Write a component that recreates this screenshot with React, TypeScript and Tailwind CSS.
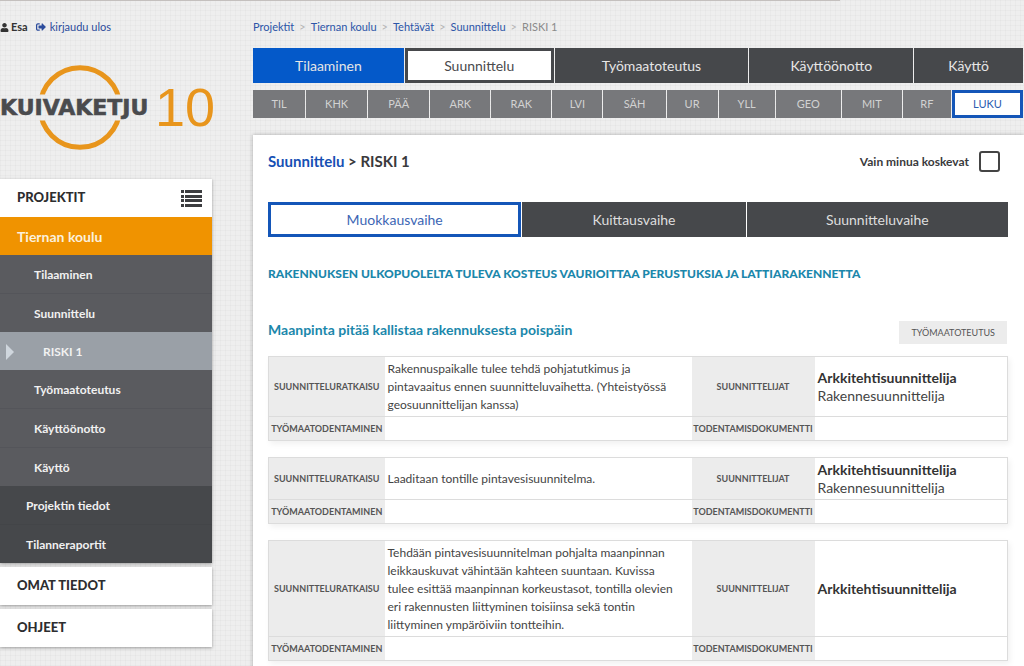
import type { ReactNode } from "react";
import { FaSignOutAlt, FaUser } from "react-icons/fa";

const phases = ["Työmaatoteutus", "Käyttöönotto", "Käyttö"];

const roles = ["TIL", "KHK", "PÄÄ", "ARK", "RAK", "LVI", "SÄH", "UR", "YLL", "GEO", "MIT", "RF"];

const crumbs = ["Projektit", "Tiernan koulu", "Tehtävät", "Suunnittelu"];

const tasks = [
  {
    solution:
      "Rakennuspaikalle tulee tehdä pohjatutkimus ja pintavaaitus ennen suunnitteluvaihetta. (Yhteistyössä geosuunnittelijan kanssa)",
    lead: "Arkkitehtisuunnittelija",
    other: "Rakennesuunnittelija",
  },
  {
    solution: "Laaditaan tontille pintavesisuunnitelma.",
    lead: "Arkkitehtisuunnittelija",
    other: "Rakennesuunnittelija",
  },
  {
    solution:
      "Tehdään pintavesisuunnitelman pohjalta maanpinnan leikkauskuvat vähintään kahteen suuntaan. Kuvissa tulee esittää maanpinnan korkeustasot, tontilla olevien eri rakennusten liittyminen toisiinsa sekä tontin liittyminen ympäröiviin tontteihin.",
    lead: "Arkkitehtisuunnittelija",
    other: "",
  },
];

function Logo() {
  return (
    <svg viewBox="0 0 216 86" className="block h-[86px] w-[216px]" role="img" aria-label="Kuivaketju 10">
      <clipPath id="ring">
        <rect x="0" y="0" width="160" height="29.5" />
        <rect x="0" y="55.5" width="160" height="31" />
      </clipPath>
      <circle cx="80" cy="42.5" r="39.8" fill="none" stroke="#e8951c" strokeWidth="5" clipPath="url(#ring)" />
      <text
        x="0"
        y="50"
        fill="#4a4b4e"
        stroke="#4a4b4e"
        strokeWidth="0.6"
        className="font-['DejaVu_Sans',sans-serif] text-[22px] font-bold"
      >
        KUIVAKETJU
      </text>
      <text x="155" y="61" fill="#e8951c" className="font-['Liberation_Sans',sans-serif] text-[54px]">
        10
      </text>
    </svg>
  );
}

function ListIcon() {
  return (
    <svg viewBox="0 0 21 17" className="h-[17px] w-[21px]" fill="#3c3d40" aria-hidden="true">
      {[0, 5, 9, 14].map((y) => (
        <g key={y}>
          <rect x="0" y={y} width="3" height="3" />
          <rect x="4" y={y} width="17" height="3" />
        </g>
      ))}
    </svg>
  );
}

function SubLink({ className, children }: { className: string; children: ReactNode }) {
  return (
    <a href="#" className={`flex items-center pt-px text-[12px] font-bold text-[#f1f1f1] ${className}`}>
      {children}
    </a>
  );
}

function Sidebar() {
  return (
    <aside className="w-[212px] shrink-0">
      <div className="flex h-5 items-center text-[11px]">
        <FaUser className="size-[9px] text-[#333]" />
        <span className="ml-[2px] font-bold text-[#333]">Esa</span>
        <a href="#" className="ml-2 flex items-center gap-1 text-[#2c4c9c]">
          <FaSignOutAlt className="size-[10px]" />
          kirjaudu ulos
        </a>
      </div>
      <div className="mt-[28px]">
        <Logo />
      </div>
      <nav className="mt-[28px] text-[#2d2d2f]">
        <div className="shadow-[0_1px_3px_rgba(0,0,0,0.35)]">
          <div className="flex h-[38px] items-center justify-between bg-white pr-[10px] pl-[17px]">
            <a href="#" className="text-[13px] font-black">PROJEKTIT</a>
            <button type="button" aria-label="Projektilista">
              <ListIcon />
            </button>
          </div>
          <a href="#" className="flex h-[38px] items-center bg-[#f09300] pt-px pl-[17px] text-[14px] font-bold text-[#fbf0dc]">
            Tiernan koulu
          </a>
          <div className="bg-[#5a5b5f]">
            <SubLink className="h-[39px] border-b border-[#54555a] pl-[34px]">Tilaaminen</SubLink>
            <SubLink className="h-[38px] pl-[34px]">Suunnittelu</SubLink>
            <SubLink className="h-[38px] gap-[29px] bg-[#9aa0a7] pl-[6px]">
              <svg viewBox="0 0 8 16" className="h-4 w-2" fill="#cfd6dd" aria-hidden="true">
                <path d="M0 0 L8 8 L0 16 Z" />
              </svg>
              RISKI 1
            </SubLink>
            <SubLink className="h-[39px] border-b border-[#54555a] pl-[34px]">Työmaatoteutus</SubLink>
            <SubLink className="h-[39px] border-b border-[#54555a] pl-[34px]">Käyttöönotto</SubLink>
            <SubLink className="h-[38px] pl-[34px]">Käyttö</SubLink>
          </div>
          <div className="bg-[#46484b]">
            <SubLink className="h-[39px] border-b border-[#434548] pl-[26px]">Projektin tiedot</SubLink>
            <SubLink className="h-[38px] pl-[26px]">Tilanneraportit</SubLink>
          </div>
        </div>
        {["OMAT TIEDOT", "OHJEET"].map((label) => (
          <a
            key={label}
            href="#"
            className="mt-1 flex h-[38px] items-center bg-white pl-[17px] text-[13px] font-black shadow-[0_1px_3px_rgba(0,0,0,0.35)]"
          >
            {label}
          </a>
        ))}
      </nav>
    </aside>
  );
}

function TopTabs() {
  return (
    <>
      <nav className="mt-[11px] grid h-[35px] grid-cols-[151fr_149fr_194fr_164fr_109fr] gap-px text-[14px] text-[#e6e6e6]">
        <button type="button" className="bg-[#0459c9]">Tilaaminen</button>
        <button type="button" className="border-[3px] border-[#46484b] bg-white text-[#4a4a4d]">
          Suunnittelu
        </button>
        {phases.map((phase) => (
          <button key={phase} type="button" className="bg-[#46484b]">
            {phase}
          </button>
        ))}
      </nav>
      <nav className="mt-[7px] grid h-[28px] grid-cols-[52fr_61fr_61fr_60fr_60fr_50fr_62fr_51fr_56fr_65fr_60fr_48fr_71fr] gap-px text-[11px] text-[#d2d2d2]">
        {roles.map((role) => (
          <button key={role} type="button" className="bg-[#77787b]">
            {role}
          </button>
        ))}
        <button type="button" className="border-[3px] border-[#1456b8] bg-white text-[#2c5cb0]">
          LUKU
        </button>
      </nav>
    </>
  );
}

function TaskTable({ solution, lead, other }: { solution: string; lead: string; other: string }) {
  const label = "bg-[#ececec] p-0 text-center text-[9px] font-bold text-[#555]";
  return (
    <table className="mb-4 w-full table-fixed border-collapse border border-[#dcdcdc] bg-white text-[#444] shadow-[2px_3px_6px_rgba(0,0,0,0.06)]">
      <colgroup>
        <col className="w-[116px]" />
        <col />
        <col className="w-[123px]" />
        <col className="w-[193px]" />
      </colgroup>
      <tbody>
        <tr className="border-b border-[#dcdcdc]">
          <th scope="row" className={label}>SUUNNITTELURATKAISU</th>
          <td className="pt-[3px] pr-2 pb-[2px] pl-[3px] text-[12px] leading-[18px]">{solution}</td>
          <th scope="row" className={label}>SUUNNITTELIJAT</th>
          <td className="pt-[3px] pb-[2px] pl-[3px] text-[14px] leading-[18px]">
            <div className="font-bold text-[#333]">{lead}</div>
            {other && <div>{other}</div>}
          </td>
        </tr>
        <tr className="h-6">
          <th scope="row" className={label}>TYÖMAATODENTAMINEN</th>
          <td />
          <th scope="row" className={label}>TODENTAMISDOKUMENTTI</th>
          <td />
        </tr>
      </tbody>
    </table>
  );
}

export default function App() {
  return (
    <div className="h-screen overflow-hidden bg-[#eeeeee] bg-[linear-gradient(rgba(0,0,0,0.02)_1px,transparent_1px),linear-gradient(90deg,rgba(0,0,0,0.02)_1px,transparent_1px)] bg-[size:5px_5px] font-[Lato,sans-serif]">
      <div className="h-px w-[82%] bg-[#c4c0be]" />
      <div className="flex gap-[41px] pt-4">
        <Sidebar />
        <div className="min-w-0 flex-1">
          <nav className="flex h-5 items-center pr-px text-[11px] text-[#8a8a8a]" aria-label="Murupolku">
            {crumbs.map((crumb) => (
              <span key={crumb}>
                <a href="#" className="text-[#2c55a8]">{crumb}</a>
                <span className="mx-[5px] text-[#b5b5b5]">&gt;</span>
              </span>
            ))}
            <span>RISKI 1</span>
          </nav>
          <div className="pr-px">
            <TopTabs />
          </div>
          <main className="mt-[17px] bg-white px-4 pb-8 pl-[15px] shadow-[0_0_4px_rgba(0,0,0,0.3)]">
            <div className="flex h-[67px] items-center justify-between pb-[14px]">
              <h1 className="text-[15px] font-bold text-[#3a3a3c]">
                <a href="#" className="text-[#1650b4]">Suunnittelu</a> &gt; RISKI 1
              </h1>
              <label className="mr-2 flex items-center gap-[10px] text-[12px] font-bold text-[#3a3a3c]">
                Vain minua koskevat
                <input
                  type="checkbox"
                  className="size-[21px] appearance-none rounded-[3px] border-2 border-[#444] bg-white"
                />
              </label>
            </div>
            <nav className="grid h-[35px] grid-cols-[253fr_223fr_261fr] gap-px text-[14px] text-[#dedede]">
              <button type="button" className="border-[3px] border-[#1456b8] bg-white text-[#3c66b4]">
                Muokkausvaihe
              </button>
              <button type="button" className="bg-[#46484b]">Kuittausvaihe</button>
              <button type="button" className="bg-[#46484b]">Suunnitteluvaihe</button>
            </nav>
            <h2 className="mt-[28px] text-[12px] leading-[18px] font-black text-[#1b87ab]">
              RAKENNUKSEN ULKOPUOLELTA TULEVA KOSTEUS VAURIOITTAA PERUSTUKSIA JA LATTIARAKENNETTA
            </h2>
            <div className="mt-[38px] mb-3 flex h-[23px] items-center justify-between">
              <h3 className="pb-[6px] text-[14px] leading-[18px] font-bold text-[#1b87ab]">
                Maanpinta pitää kallistaa rakennuksesta poispäin
              </h3>
              <button type="button" className="mr-px h-[23px] bg-[#ececec] px-3 text-[9px] text-[#555]">
                TYÖMAATOTEUTUS
              </button>
            </div>
            {tasks.map((task) => (
              <TaskTable key={task.solution} {...task} />
            ))}
          </main>
        </div>
      </div>
    </div>
  );
}
